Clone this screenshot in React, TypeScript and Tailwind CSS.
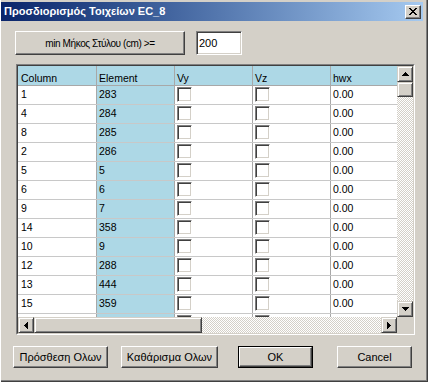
import React from "react";

const rows: [string, string][] = [
  ["1", "283"],
  ["4", "284"],
  ["8", "285"],
  ["2", "286"],
  ["5", "5"],
  ["6", "6"],
  ["9", "7"],
  ["14", "358"],
  ["10", "9"],
  ["12", "288"],
  ["13", "444"],
  ["15", "359"],
  ["", ""],
];

const raised =
  "border border-t-white border-l-white border-r-[#404040] border-b-[#404040] shadow-[inset_-1px_-1px_0_#808080] bg-[#d4d0c8]";
const sbBtn =
  "border border-t-[#d4d0c8] border-l-[#d4d0c8] border-r-[#404040] border-b-[#404040] shadow-[inset_1px_1px_0_#ffffff,inset_-1px_-1px_0_#808080] bg-[#d4d0c8] flex items-center justify-center shrink-0";
const checker =
  "bg-[repeating-conic-gradient(#d4d0c8_0_25%,#ffffff_0_50%)] bg-[length:2px_2px]";

function Arrow({ dir }: { dir: "up" | "down" | "left" | "right" }) {
  const r = [
    [3, 1],
    [2, 3],
    [1, 5],
    [0, 7],
  ];
  if (dir === "up" || dir === "down") {
    return (
      <svg width="7" height="4" viewBox="0 0 7 4" shapeRendering="crispEdges">
        {r.map(([x, w], i) => (
          <rect key={i} x={x} y={dir === "up" ? i : 3 - i} width={w} height={1} fill="#000" />
        ))}
      </svg>
    );
  }
  return (
    <svg width="4" height="7" viewBox="0 0 4 7" shapeRendering="crispEdges">
      {r.map(([y, h], i) => (
        <rect key={i} y={y} x={dir === "left" ? i : 3 - i} height={h} width={1} fill="#000" />
      ))}
    </svg>
  );
}

function CheckBox() {
  return (
    <div className="w-[15px] h-[15px] bg-white border border-t-[#808080] border-l-[#808080] border-r-white border-b-white shadow-[inset_1px_1px_0_#404040,inset_-1px_-1px_0_#d4d0c8]" />
  );
}

export default function App() {
  const sans = "font-['Liberation_Sans',Arial,sans-serif]";
  return (
    <div
      className={`w-[428px] h-[382px] bg-[#d4d0c8] pt-[2px] pl-[1px] flex flex-col shadow-[inset_1px_0_0_#ffffff,inset_-1px_-1px_0_#404040,inset_-2px_-2px_0_#808080] ${sans}`}
    >
      {/* Title bar */}
      <div className="w-[422px] h-[19px] shrink-0 bg-linear-to-r from-[#0a246a] to-[#a6caf0] flex items-center justify-between">
        <span className="pl-[3px] text-white font-bold text-[11px] leading-none whitespace-nowrap">
          Προσδιορισμός Τοιχείων EC_8
        </span>
        <div className={`${raised} w-[16px] h-[14px] mr-[2px] flex items-center justify-center`}>
          <svg width="8" height="7" viewBox="0 0 8 7" shapeRendering="crispEdges">
            {[0, 1, 2, 3, 4, 5, 6].map((i) => (
              <React.Fragment key={i}>
                <rect x={i} y={i} width={2} height={1} fill="#000" />
                <rect x={6 - i} y={i} width={2} height={1} fill="#000" />
              </React.Fragment>
            ))}
          </svg>
        </div>
      </div>

      {/* Top controls */}
      <div className="flex mt-[10px] ml-[14px] gap-[11px]">
        <div
          className={`${raised} w-[170px] h-[24px] flex items-center justify-center text-[10px] tracking-[-0.4px] text-black whitespace-nowrap`}
        >
          min Μήκος Στύλου (cm) &gt;=
        </div>
        <div className="w-[46px] h-[24px] bg-white border border-t-[#808080] border-l-[#808080] border-r-white border-b-white shadow-[inset_1px_1px_0_#404040,inset_-1px_-1px_0_#d4d0c8] flex items-center pl-[2px] text-[11px] text-black">
          200
        </div>
      </div>

      {/* Grid */}
      <div className="mt-[9px] ml-[15px] w-[399px] h-[271px] border border-t-[#808080] border-l-[#808080] border-r-white border-b-white">
        <div className="w-full h-full border border-t-[#404040] border-l-[#404040] border-r-[#d4d0c8] border-b-[#d4d0c8] flex flex-col">
          <div className="flex flex-1 min-h-0">
            <div className="flex-1 min-w-0 overflow-hidden bg-white text-[10.5px] text-black">
              <div className="flex h-[20px] border-b border-[#a8a8a8] bg-[#add8e6] items-end">
                {["Column", "Element", "Vy", "Vz", "hwx"].map((h, i) => (
                  <div
                    key={h}
                    className={`${i === 0 ? "w-[79px] pl-[3px]" : "w-[78px] pl-[2px]"} shrink-0 h-full border-r border-[#a8a8a8] flex items-end leading-[14px]`}
                  >
                    {h}
                  </div>
                ))}
              </div>
              {rows.map(([c, e], i) => (
                <div key={i} className="flex h-[19px] border-b border-[#c8c8c8]">
                  <div className="w-[79px] shrink-0 pl-[3px] border-r border-[#a8a8a8] flex items-center">
                    {c}
                  </div>
                  <div className="w-[78px] shrink-0 pl-[2px] border-r border-[#a8a8a8] bg-[#add8e6] flex items-center">
                    {e}
                  </div>
                  <div className="w-[78px] shrink-0 pl-[2px] pt-[1px] border-r border-[#a8a8a8]">
                    <CheckBox />
                  </div>
                  <div className="w-[78px] shrink-0 pl-[2px] pt-[1px] border-r border-[#a8a8a8]">
                    <CheckBox />
                  </div>
                  <div className="w-[78px] shrink-0 pl-[2px] border-r border-[#a8a8a8] flex items-center">
                    {c ? "0.00" : ""}
                  </div>
                </div>
              ))}
            </div>
            {/* Vertical scrollbar */}
            <div className="w-[16px] shrink-0 flex flex-col">
              <div className={`${sbBtn} h-[16px]`}>
                <Arrow dir="up" />
              </div>
              <div className={`${sbBtn} h-[15px]`} />
              <div className={`flex-1 ${checker}`} />
              <div className={`${sbBtn} h-[16px]`}>
                <Arrow dir="down" />
              </div>
            </div>
          </div>
          {/* Horizontal scrollbar */}
          <div className="h-[16px] shrink-0 flex">
            <div className={`${sbBtn} w-[16px]`}>
              <Arrow dir="left" />
            </div>
            <div className={`${sbBtn} w-[168px]`} />
            <div className={`flex-1 ${checker}`} />
            <div className={`${sbBtn} w-[16px]`}>
              <Arrow dir="right" />
            </div>
            <div className="w-[16px] shrink-0 bg-[#d4d0c8]" />
          </div>
        </div>
      </div>

      {/* Bottom buttons */}
      <div className="flex mt-[11px] ml-[12px] text-[11px] text-black">
        <div className={`${raised} w-[95px] h-[22px] flex items-center justify-center whitespace-nowrap`}>
          Πρόσθεση Ολων
        </div>
        <div className={`${raised} ml-[13px] w-[97px] h-[22px] flex items-center justify-center whitespace-nowrap`}>
          Καθάρισμα Ολων
        </div>
        <div className="ml-[20px] w-[75px] h-[22px] border border-black">
          <div className={`${raised} w-full h-full flex items-center justify-center`}>OK</div>
        </div>
        <div className={`${raised} ml-[24px] w-[75px] h-[22px] flex items-center justify-center`}>
          Cancel
        </div>
      </div>
    </div>
  );
}
